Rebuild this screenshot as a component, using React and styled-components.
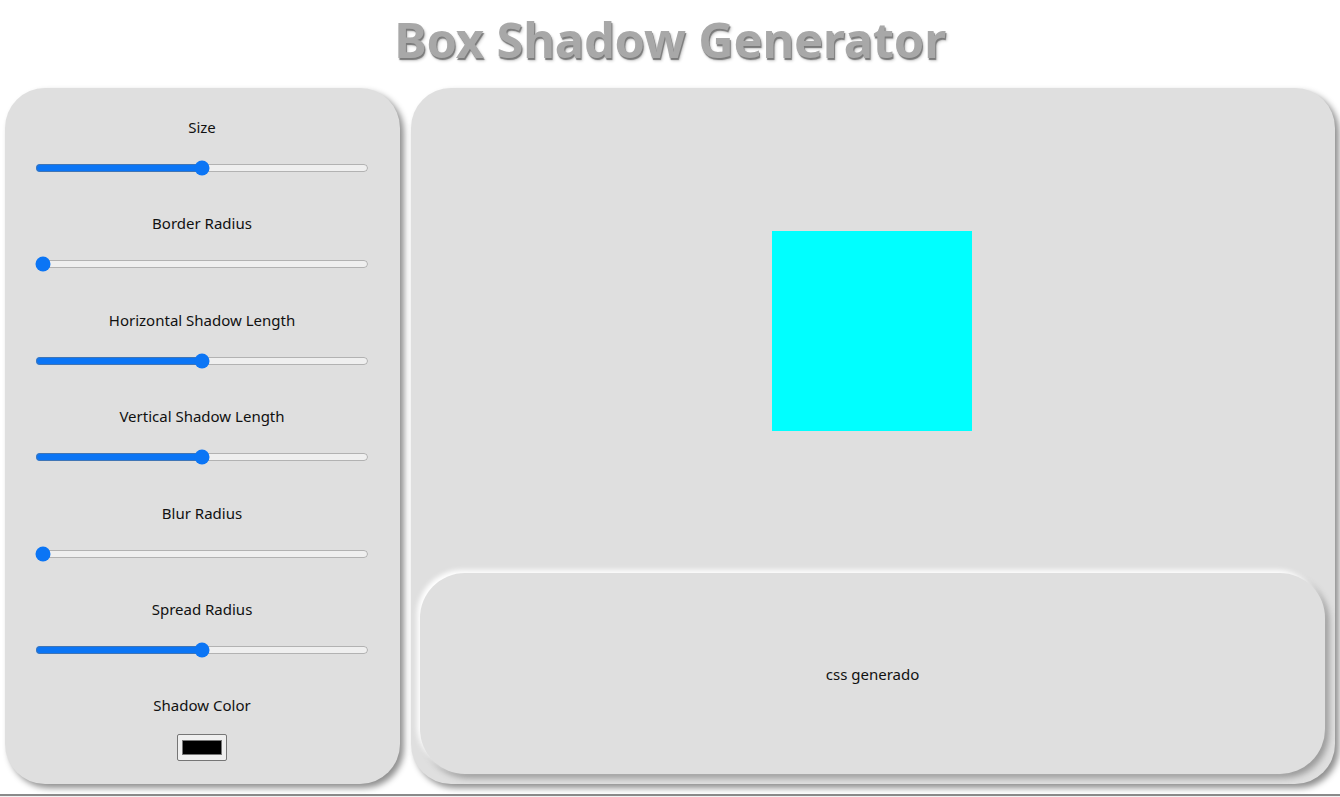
import React, { useState } from 'react';
import styled, { createGlobalStyle } from 'styled-components';

const GlobalStyle = createGlobalStyle`
	html, body {
		margin: 0;
		padding: 0;
		background: #fff;
		font-family: "Noto Sans", "Open Sans", sans-serif;
		overflow: hidden;
	}
`

const Page = styled.div`
	width: 1340px;
	height: 797px;
	display: flex;
	flex-direction: column;
`

const Title = styled.h1`
	margin: 0;
	height: 88px;
	line-height: 78px;
	text-align: center;
	font-size: 49px;
	font-weight: 700;
	letter-spacing: -0.25px;
	color: #a8a8a8;
	text-shadow: 1px 2px 1px #7a7a7a, 2px 3px 3px #cfcfcf;
	box-sizing: border-box;
`

const Main = styled.div`
	display: flex;
	gap: 11px;
	padding: 0 5px 0 5px;
	height: 696px;
`

const Controls = styled.div`
	width: 395px;
	flex-shrink: 0;
	box-sizing: border-box;
	background: #dfdfdf;
	border-radius: 40px;
	box-shadow: 4px 4px 6px #8f8f8f;
	padding: 27px 0 0 30px;
	display: flex;
	flex-direction: column;
	overflow: hidden;
`

const Field = styled.div`
	width: 334px;
	height: 96.4px;
	flex-shrink: 0;
	display: flex;
	flex-direction: column;
	align-items: center;
`

const Label = styled.label`
	font-size: 15px;
	color: #111;
	line-height: 24px;
	margin-bottom: 21px;
`

const Range = styled.input`
	width: 334px;
	margin: 0;
	accent-color: #0b75f5;
`

const Color = styled.input`
	width: 50px;
	height: 27px;
	margin: -4px 0 0 0;
	padding: 1px 2px;
	border: 1px solid #767676;
	border-radius: 2px;
	background: #efefef;
`

const Preview = styled.div`
	flex: 1;
	background: #dfdfdf;
	border-radius: 40px;
	box-shadow: 4px 4px 6px #8f8f8f;
	display: flex;
	flex-direction: column;
	padding: 0 10px 10px 9px;
	box-sizing: border-box;
`

const Stage = styled.div`
	flex: 1;
	display: flex;
	align-items: center;
	justify-content: center;
	margin-right: 2px;
`

const Box = styled.div`
	width: 200px;
	height: 200px;
	background: #00ffff;
`

const CodeBox = styled.div`
	height: 201px;
	border-radius: 45px;
	background: #dfdfdf;
	box-shadow: -3px -3px 5px #ffffff, 4px 4px 6px #9a9a9a;
	display: flex;
	align-items: center;
	justify-content: center;
	font-size: 15px;
	color: #111;
`

const Footer = styled.div`
	margin-top: 10px;
	flex: 1;
	border-top: 2px solid #8a8a8a;
	background: #f2f2f2;
`

const sliders = [
	{ name: 'Size', value: 50 },
	{ name: 'Border Radius', value: 0 },
	{ name: 'Horizontal Shadow Length', value: 50 },
	{ name: 'Vertical Shadow Length', value: 50 },
	{ name: 'Blur Radius', value: 0 },
	{ name: 'Spread Radius', value: 50 },
]

const App = () => {
	const [values, setValues] = useState(sliders.map(s => s.value))

	return (
		<Page>
			<GlobalStyle />
			<Title>Box Shadow Generator</Title>
			<Main>
				<Controls>
					{sliders.map((s, i) => (
						<Field key={s.name}>
							<Label>{s.name}</Label>
							<Range
								type="range"
								min="0"
								max="100"
								value={values[i]}
								onChange={e => {
									const next = [...values]
									next[i] = Number(e.target.value)
									setValues(next)
								}}
							/>
						</Field>
					))}
					<Field>
						<Label>Shadow Color</Label>
						<Color type="color" defaultValue="#000000" />
					</Field>
				</Controls>
				<Preview>
					<Stage>
						<Box />
					</Stage>
					<CodeBox>css generado</CodeBox>
				</Preview>
			</Main>
			<Footer />
		</Page>
	)
}

export default App;
